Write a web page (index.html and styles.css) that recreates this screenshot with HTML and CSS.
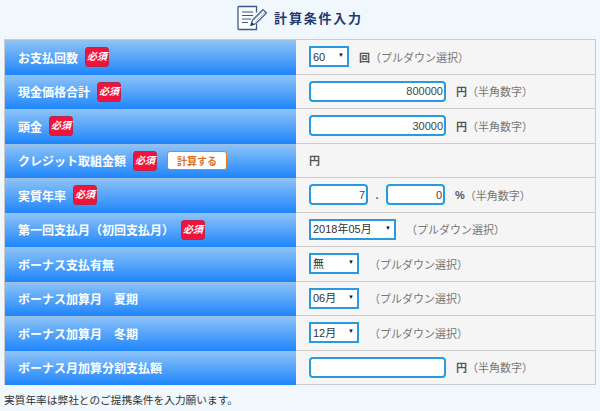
FILE: index.html
```html
<!DOCTYPE html>
<html lang="ja">
<head>
  <meta charset="UTF-8">
  <title>計算条件入力</title>
  <link rel="stylesheet" href="styles.css">
</head>
<body>
  <div class="heading">
    <svg class="heading-icon" width="31" height="26" viewBox="0 0 31 26">
      <path d="M2 1.5h17.5v6M19.5 19v5.5H2a1 1 0 0 1-1-1v-21a1 1 0 0 1 1-1" fill="#fff" stroke="#3f5a8a" stroke-width="1.3"/>
      <path d="M5 7h11M5 10.5h11M5 14h9M5 17.5h6" stroke="#3f5a8a" stroke-width="1.1" fill="none"/>
      <path d="M14 20l1.5-5L26 4.5l3.5 3.5L19 18.5z" fill="#fff" stroke="#3f5a8a" stroke-width="1.2"/>
      <path d="M17 15l9.5-9.5M18.500 16.500l9.500-9.500" stroke="#8a9cbc" stroke-width="0.8" fill="none"/>
      <path d="M13.500 21l1.200-4 2.800 2.800z" fill="#22386a"/>
    </svg>
    <span class="heading-title">計算条件入力</span>
  </div>

  <div class="form-table">
    <div class="row">
      <div class="label">お支払回数<span class="required">必須</span></div>
      <div class="value">
        <span class="select w40"><select><option>60</option></select></span>
        <span class="unit">回</span><span class="hint">（プルダウン選択）</span>
      </div>
    </div>
    <div class="row">
      <div class="label">現金価格合計<span class="required">必須</span></div>
      <div class="value">
        <input class="num wide" type="text" value="800000">
        <span class="unit">円</span><span class="hint">（半角数字）</span>
      </div>
    </div>
    <div class="row">
      <div class="label">頭金<span class="required">必須</span></div>
      <div class="value">
        <input class="num wide" type="text" value="30000">
        <span class="unit">円</span><span class="hint">（半角数字）</span>
      </div>
    </div>
    <div class="row">
      <div class="label">クレジット取組金額<span class="required">必須</span><button class="calc-btn" type="button">計算する</button></div>
      <div class="value"><span class="unit unit-plain">円</span></div>
    </div>
    <div class="row">
      <div class="label">実質年率<span class="required">必須</span></div>
      <div class="value">
        <input class="num short" type="text" value="7">
        <span class="dot">.</span>
        <input class="num short" type="text" value="0">
        <span class="unit">%</span><span class="hint">（半角数字）</span>
      </div>
    </div>
    <div class="row">
      <div class="label">第一回支払月（初回支払月）<span class="required">必須</span></div>
      <div class="value">
        <span class="select w87"><select><option>2018年05月</option></select></span>
        <span class="hint hint-select">（プルダウン選択）</span>
      </div>
    </div>
    <div class="row">
      <div class="label">ボーナス支払有無</div>
      <div class="value">
        <span class="select w50"><select><option>無</option></select></span>
        <span class="hint hint-select">（プルダウン選択）</span>
      </div>
    </div>
    <div class="row">
      <div class="label">ボーナス加算月　夏期</div>
      <div class="value">
        <span class="select w50"><select><option>06月</option></select></span>
        <span class="hint hint-select">（プルダウン選択）</span>
      </div>
    </div>
    <div class="row">
      <div class="label">ボーナス加算月　冬期</div>
      <div class="value">
        <span class="select w50"><select><option>12月</option></select></span>
        <span class="hint hint-select">（プルダウン選択）</span>
      </div>
    </div>
    <div class="row">
      <div class="label">ボーナス月加算分割支払額</div>
      <div class="value">
        <input class="num wide" type="text" value="">
        <span class="unit">円</span><span class="hint">（半角数字）</span>
      </div>
    </div>
  </div>

  <p class="note">実質年率は弊社とのご提携条件を入力願います。</p>
</body>
</html>
```

FILE: styles.css
```css
body {
  margin: 0;
  height: 411px;
  overflow: hidden;
  background: #f0f7fd;
  color: #333;
  font-family: "Liberation Sans", "Noto Sans CJK JP", sans-serif;
}
.heading {
  display: flex;
  align-items: center;
  justify-content: center;
  gap: 6px;
  height: 39px;
  box-sizing: border-box;
  padding-bottom: 4px;
}
.heading-title {
  font-size: 13px;
  font-weight: bold;
  letter-spacing: 1.8px;
  color: #1f3a6e;
}
.form-table {
  margin: 0 4px;
  border-top: 1px solid #ccc;
  border-left: 1px solid #ccc;
  border-right: 1px solid #ccc;
}
.row {
  display: grid;
  grid-template-columns: 291px 1fr;
  height: 34.5px;
  box-sizing: border-box;
  border-bottom: 1px solid #ccc;
}
.label {
  display: flex;
  align-items: center;
  padding-left: 13px;
  margin-bottom: -1px;
  background: linear-gradient(#8fc4f8, #1e85fb);
  box-shadow: inset 0 1px 0 #9dbfe0;
  color: #fff;
  font-size: 12px;
  font-weight: bold;
  white-space: pre;
}
.required {
  display: block;
  width: 24px;
  height: 20px;
  margin-left: 7px;
  box-sizing: border-box;
  border: 1px solid #b8274f;
  border-radius: 3px;
  background: #f0143c;
  color: #fff;
  font-family: "Liberation Serif", "Noto Sans CJK JP", serif;
  font-size: 10px;
  font-style: italic;
  line-height: 18px;
  text-align: center;
}
.calc-btn {
  width: 60px;
  height: 19px;
  margin-left: 10px;
  padding: 0;
  background: #fff;
  border: 1px solid #e87a20;
  border-radius: 3px;
  color: #d9701e;
  font-family: inherit;
  font-size: 10px;
  font-weight: bold;
}
.value {
  display: flex;
  align-items: center;
  padding-left: 13px;
  background: #f5f5f5;
  font-size: 11px;
  color: #555;
}
.num {
  height: 21px;
  box-sizing: border-box;
  padding: 0 1px;
  background: #fff;
  border: 2px solid #2a9ae0;
  border-radius: 4px;
  color: #444;
  font-family: inherit;
  font-size: 11px;
  text-align: right;
}
.wide {
  width: 137px;
}
.short {
  width: 59px;
}
.dot {
  width: 18px;
  font-weight: bold;
  text-align: center;
}
.select {
  position: relative;
  display: block;
  height: 21px;
}
.select::after {
  content: "▼";
  position: absolute;
  right: 5px;
  top: 6px;
  font-size: 6px;
  color: #111;
}
.select select {
  width: 100%;
  height: 100%;
  padding: 0 0 0 2px;
  appearance: none;
  background: #fff;
  border: 2px solid #2a9ae0;
  border-radius: 0;
  color: #333;
  font-family: inherit;
  font-size: 11px;
}
.w40 {
  width: 40px;
}
.w50 {
  width: 50px;
}
.w87 {
  width: 87px;
}
.unit {
  margin-left: 10px;
  font-weight: bold;
}
.unit-plain {
  margin-left: 0;
}
.hint {
  color: #777;
}
.hint-select {
  margin-left: 10px;
}
.note {
  margin: 7px 0 0 4px;
  font-size: 10.7px;
  color: #333;
}
```
